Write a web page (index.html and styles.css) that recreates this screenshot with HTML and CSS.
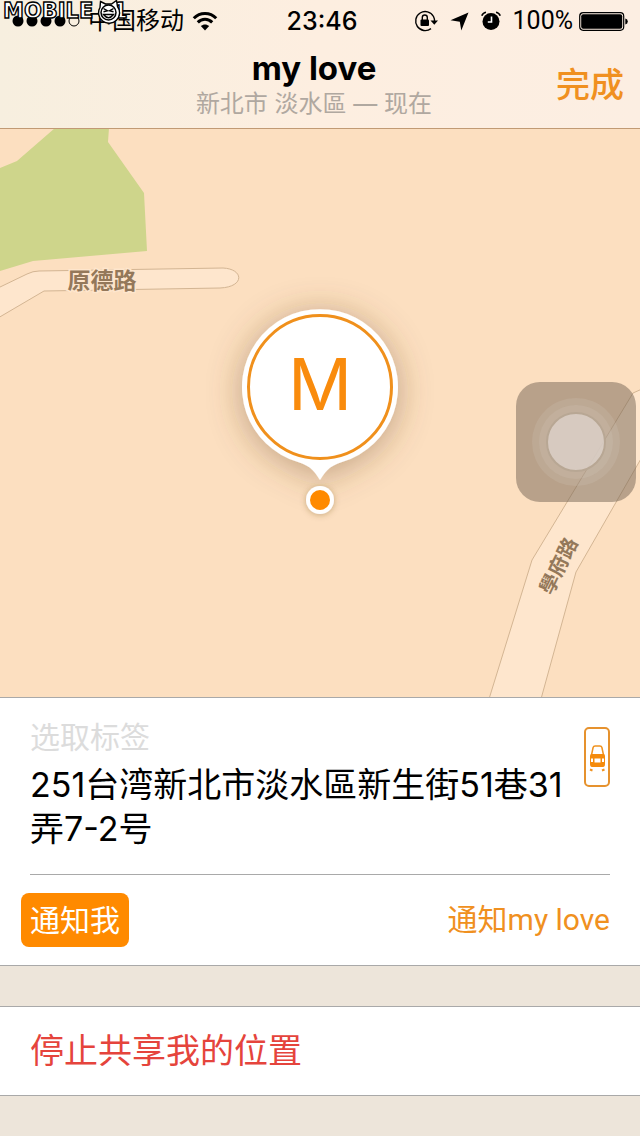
FILE: index.html
```html
<!DOCTYPE html>
<html lang="zh-CN">
<head>
  <meta charset="UTF-8">
  <meta name="viewport" content="width=device-width, initial-scale=1.0">
  <title>my love</title>
  <link rel="stylesheet" href="styles.css">
</head>
<body>
  <header class="header">
    <div class="status-bar">
      <div class="status-left">
        <svg class="signal" width="68" height="14" viewBox="0 0 68 14">
          <circle cx="6" cy="7" r="5.5"/>
          <circle cx="20" cy="7" r="5.5"/>
          <circle cx="34" cy="7" r="5.5"/>
          <circle cx="48" cy="7" r="5.5"/>
          <circle cx="62" cy="7" r="5" fill="none" stroke="#000"/>
        </svg>
        <span class="carrier">中国移动</span>
        <svg width="26" height="20" viewBox="0 0 26 20" fill="none" stroke="#000" stroke-width="3">
          <path d="M1.8 7.2C8 .8 18 .8 24.2 7.2"/>
          <path d="M5.8 11.4c4-4.2 10.400-4.200 14.400 0"/>
          <path d="M13 19.500l-4.200-4.400c2.400-2.300 6-2.300 8.400 0z" fill="#000" stroke="none"/>
        </svg>
      </div>
      <time class="clock">23:46</time>
      <div class="status-right">
        <svg width="24" height="22" viewBox="0 0 24 22">
          <path d="M19.500 6.500A9.500 9.500 0 1 0 17 18.600M19.500 6.500A9.500 9.500 0 0 1 20.500 11" fill="none" stroke="#000" stroke-width="1.400"/>
          <path d="M16.500 10.500h7.500l-3.700 4.200z"/>
          <rect x="6.500" y="9.500" width="8.500" height="6.500" rx="1"/>
          <path d="M8.300 10V7.500a2.500 2.500 0 0 1 5 0V10" fill="none" stroke="#000" stroke-width="1.400"/>
        </svg>
        <svg width="19" height="19" viewBox="0 0 19 19">
          <path d="M18.500.5L11.300 18.500 9.800 9.800.5 8.300z"/>
        </svg>
        <svg width="20" height="20" viewBox="0 0 20 20">
          <circle cx="10" cy="10.500" r="8.500"/>
          <path d="M10.500 5.500v5.500H6.800" fill="none" stroke="#fff" stroke-width="1.600"/>
          <path d="M.8 4.800Q1.800 1.800 5 1.200M19.200 4.800Q18.200 1.800 15 1.200" fill="none" stroke="#000" stroke-width="1.600"/>
        </svg>
        <span class="percent">100%</span>
        <svg width="49" height="19" viewBox="0 0 49 19">
          <rect x=".7" y=".7" width="44" height="17.600" rx="3.500" fill="none" stroke="#000" stroke-width="1.200"/>
          <rect x="2.200" y="2.200" width="41" height="14.600" rx="2"/>
          <path d="M46.300 6.500q2.500.6 2.500 3t-2.500 3z"/>
        </svg>
      </div>
    </div>

    <div class="nav">
      <div class="nav-title">
        <h1>my love</h1>
        <p>新北市 淡水區 — 现在</p>
      </div>
      <button class="done" type="button">完成</button>
    </div>

    <!-- Watermark -->
    <svg class="watermark" width="130" height="26" viewBox="0 0 130 26">
      <text class="watermark-text" x="3" y="18">MOBILE</text>
      <text class="watermark-text" x="113" y="18">1</text>
      <path d="M100.500 1.500l5 2.500h6l5-3.500 1 6a10.500 10.500 0 1 1-17.500 1z" fill="#fff" stroke="#000" stroke-width="1.400"/>
      <circle cx="108.500" cy="12.500" r="7.500" fill="#fff" stroke="#000" stroke-width="1.500"/>
      <path d="M103.500 8.500l4 2.300-4 1M113.500 8.500l-4 2.300 4 1M103.500 14.500h10q-5 6.500-10 0z" fill="none" stroke="#000" stroke-width="1.400"/>
    </svg>
  </header>

  <main class="map">
    <svg class="map-canvas" viewBox="0 0 640 568" preserveAspectRatio="xMidYMid slice">
      <defs>
        <filter id="pin-shadow" x="-50%" y="-50%" width="200%" height="200%">
          <feDropShadow dx="0" dy="4" stdDeviation="17" flood-color="#6b4a20" flood-opacity=".42"/>
        </filter>
        <filter id="dot-shadow" x="-50%" y="-50%" width="200%" height="200%">
          <feDropShadow dx="0" dy="1" stdDeviation="3" flood-color="#6b4a20" flood-opacity=".35"/>
        </filter>
      </defs>

      <path class="park" d="M55 -1L17 32 0 39v103l33-10 114-10-3-58-36-51 1-14z"/>

      <path class="road" d="M-2 159L27 145q6-3 12-3l184-3c21 1 22 19-3 20L44 162-2 189z"/>
      <path class="road" d="M489 570L532 431 633 264l9-4v68L576 443 541 570z"/>

      <text class="road-name" x="102" y="160">原德路</text>
      <text class="road-name road-name-small" transform="translate(565 440) rotate(-64)">學府路</text>

      <!-- Pin -->
      <path filter="url(#pin-shadow)" fill="#fff" d="M320 351c-4-6-8-14-22-18a78 78 0 1 1 44 0c-14 4-18 12-22 18z"/>
      <circle cx="320" cy="258" r="71.500" fill="none" stroke="#f0901c" stroke-width="3"/>
      <text class="pin-letter" x="320" y="281">M</text>
      <circle filter="url(#dot-shadow)" cx="320" cy="371" r="14" fill="#fff"/>
      <circle cx="320" cy="371" r="10" fill="#ff8a00"/>
    </svg>

    <button class="assist" type="button" aria-label="AssistiveTouch">
      <span class="assist-ring"><span class="assist-ring"><span class="assist-dot"></span></span></span>
    </button>
  </main>

  <section class="panel">
    <div class="place">
      <div class="place-text">
        <button class="tag" type="button">选取标签</button>
        <p class="address">251台湾新北市淡水區新生街51巷31弄7-2号</p>
      </div>
      <button class="car" type="button" aria-label="路线">
        <svg width="26" height="60" viewBox="0 0 26 60">
          <rect x="1" y="1" width="24" height="58" rx="4" fill="none" stroke="#e6922e" stroke-width="2"/>
          <path d="M7.500 28l1.600-7.500q.4-1.500 2-1.500h4.800q1.600 0 2 1.500L19.500 28" fill="none" stroke="#f0921f" stroke-width="1.500"/>
          <path d="M7.500 27h12q1.500 0 1.500 2v8q0 3-2 3H8q-2 0-2-3v-8q0-2 1.500-2z" fill="#f58b0c"/>
          <path d="M10.500 31.500h6v4h-6zM7 31.500h2v3.500H7zM18 31.500h2v3.500h-2z" fill="#fff"/>
          <path d="M6 42.500l2.500 1M20.500 42.500l-2.500 1" stroke="#f0921f" stroke-width="2"/>
        </svg>
      </button>
    </div>
    <div class="actions">
      <button class="btn" type="button">通知我</button>
      <button class="link" type="button">通知my love</button>
    </div>
  </section>

  <section class="panel stop">
    <button class="stop-btn" type="button">停止共享我的位置</button>
  </section>
</body>
</html>
```
FILE: styles.css
```css
:root {
  --orange: #ff8a00;
  --orange-text: #f09020;
  --red: #e5443c;
  --line: #a9a9a9;
  --land: #fcdfc0;
  --road: #fee6cd;
  --backdrop: #ede5da;
  --font-ui: Inter, "Noto Sans CJK SC", sans-serif;
  --font-text: Roboto, "Noto Sans CJK SC", sans-serif;
}

* {
  box-sizing: border-box;
}

body {
  margin: 0;
  min-height: 100vh;
  padding-bottom: 40px;
  display: flex;
  flex-direction: column;
  background: var(--backdrop);
  font-family: var(--font-ui);
  color: #000;
}

h1, p {
  margin: 0;
}

button {
  padding: 0;
  border: none;
  background: none;
  font-family: inherit;
  cursor: pointer;
}

svg {
  display: block;
  flex-shrink: 0;
}

/* Header */
.header {
  position: relative;
  background: linear-gradient(to right, #f7efdf, #fdeee0 50%, #fceee2);
  border-bottom: 1px solid #c19a74;
}

.status-bar {
  display: grid;
  grid-template-columns: 1fr auto 1fr;
  align-items: center;
  height: 40px;
  padding: 2px 12px 0;
}

.status-left, .status-right {
  display: flex;
  align-items: center;
}

.status-left {
  gap: 8px;
}

.status-right {
  justify-content: flex-end;
  gap: 12px;
}

.carrier, .clock, .percent {
  line-height: 38px;
}

.carrier {
  font-size: 24px;
}

.clock {
  padding-left: 4px;
  font-size: 25px;
  font-weight: 500;
}

.percent {
  margin-right: -6px;
  font-family: var(--font-text);
  font-size: 25px;
}

.nav {
  display: grid;
  grid-template-columns: 1fr auto 1fr;
  height: 88px;
  padding: 0 16px 0 4px;
}

.nav-title {
  grid-column: 2;
  padding-top: 8px;
  text-align: center;
}

.nav-title h1 {
  font-size: 33px;
  font-weight: 700;
  line-height: 40px;
}

.nav-title p {
  font-size: 24px;
  line-height: 32px;
  color: #b0a8a0;
}

.done {
  justify-self: end;
  padding-bottom: 4px;
  font-size: 34px;
  font-weight: 500;
  color: var(--orange-text);
}

.watermark {
  position: absolute;
  top: 0;
  left: 0;
}

.watermark-text {
  font-family: "DejaVu Sans", sans-serif;
  font-size: 21px;
  font-weight: 700;
  fill: #fff;
  stroke: #000;
  stroke-width: 1.4px;
}

/* Map */
.map {
  position: relative;
  flex: 1 0 auto;
  min-height: 400px;
  background: var(--land);
}

.map-canvas {
  position: absolute;
  inset: 0;
  width: 100%;
  height: 100%;
}

.park {
  fill: #ced58b;
}

.road {
  fill: var(--road);
  stroke: #d3b593;
  stroke-width: 1px;
}

.road-name {
  font-family: "Noto Sans CJK TC", sans-serif;
  font-size: 23px;
  font-weight: 700;
  text-anchor: middle;
  fill: #94785a;
  stroke: var(--road);
  stroke-width: 3px;
  paint-order: stroke;
}

.road-name-small {
  font-size: 20px;
}

.pin-letter {
  font-size: 71px;
  text-anchor: middle;
  fill: #f98b0c;
}

.assist {
  position: absolute;
  top: 253px;
  right: 4px;
  display: grid;
  place-items: center;
  width: 120px;
  height: 120px;
  border-radius: 24px;
  background: rgba(115, 100, 84, 0.5);
}

.assist-ring {
  padding: 7px;
  border-radius: 50%;
  background: rgba(215, 205, 195, 0.18);
}

.assist-ring, .assist-dot {
  display: block;
}

.assist-dot {
  width: 60px;
  height: 60px;
  border: 2px solid #b8a794;
  border-radius: 50%;
  background: rgba(220, 209, 201, 0.8);
}

/* Panels */
.panel {
  padding: 0 30px;
  background: #fff;
  border-top: 1px solid var(--line);
  border-bottom: 1px solid var(--line);
}

.place {
  display: flex;
  justify-content: space-between;
  padding: 19px 0 23px;
  border-bottom: 1px solid var(--line);
}

.place-text {
  flex: 1;
}

.tag {
  display: block;
  font-size: 30px;
  line-height: 40px;
  color: #dcdcdc;
}

.address {
  padding-top: 6px;
  font-size: 34px;
  line-height: 44px;
}

.car {
  align-self: flex-start;
  padding-top: 10px;
}

.actions {
  display: flex;
  justify-content: space-between;
  align-items: center;
  height: 90px;
}

.btn, .link {
  font-size: 30px;
  line-height: 54px;
}

.btn {
  margin-left: -9px;
  padding: 0 9px;
  border-radius: 8px;
  background: var(--orange);
  color: #fff;
}

.link {
  font-family: var(--font-text);
  color: var(--orange-text);
}

.stop {
  margin-top: 40px;
}

.stop-btn {
  display: block;
  width: 100%;
  font-size: 34px;
  line-height: 88px;
  text-align: left;
  color: var(--red);
}
```
